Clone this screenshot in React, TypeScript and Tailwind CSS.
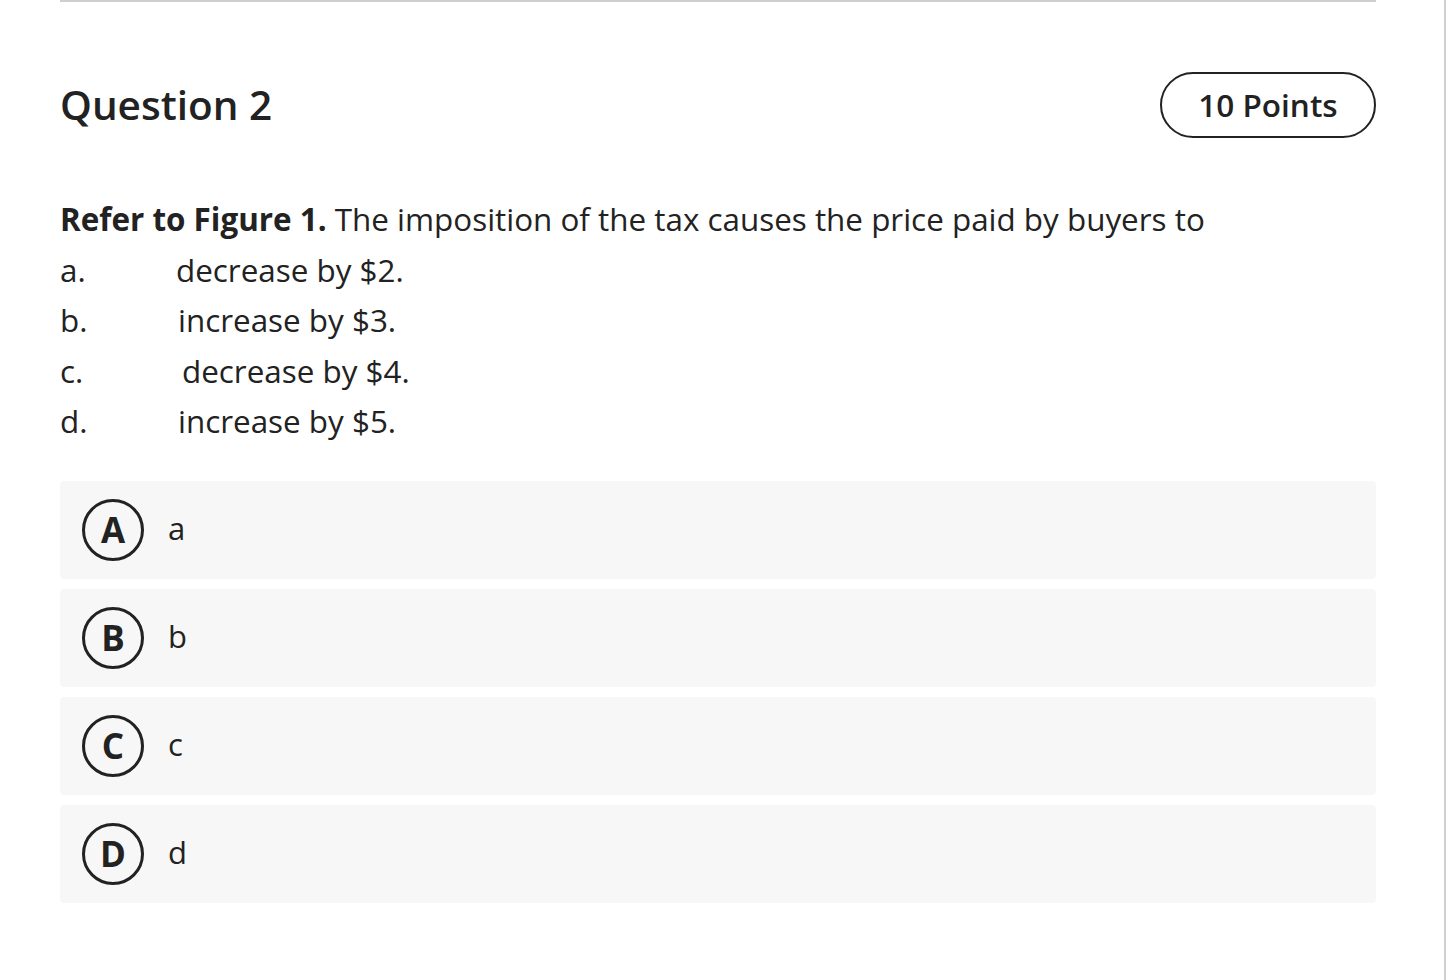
import React from 'react';

const options = [
  { key: 'a.', text: 'decrease by $2.', pad: 'pl-[116px]' },
  { key: 'b.', text: 'increase by $3.', pad: 'pl-[118px]' },
  { key: 'c.', text: 'decrease by $4.', pad: 'pl-[122px]' },
  { key: 'd.', text: 'increase by $5.', pad: 'pl-[118px]' },
];

const choices = [
  { letter: 'A', label: 'a' },
  { letter: 'B', label: 'b' },
  { letter: 'C', label: 'c' },
  { letter: 'D', label: 'd' },
];

export default function App() {
  return (
    <div className="w-[1453px] h-[980px] bg-white text-[#222] font-['Open_Sans',sans-serif] flex overflow-hidden">
      {/* Main column */}
      <div className="w-[1444px] pl-[60px] pr-[68px]">
        <div className="h-[2px] bg-[#cfcfcf]"></div>

        {/* Header */}
        <div className="flex items-center justify-between mt-[70px] h-[66px]">
          <h2 className="text-[40.5px] font-semibold leading-none">Question 2</h2>
          <div className="w-[216px] h-[66px] rounded-full border-2 border-[#222] flex items-center justify-center text-[31.5px] font-semibold">
            10 Points
          </div>
        </div>

        {/* Question body */}
        <div className="mt-[56px] text-[31.4px] leading-[50.5px]">
          <p>
            <span className="font-bold">Refer to Figure 1.</span> The imposition of the tax causes the price paid by buyers to
          </p>
          {options.map((o) => (
            <div key={o.key} className="flex">
              <span className="w-[0px] whitespace-nowrap">{o.key}</span>
              <span className={o.pad}>{o.text}</span>
            </div>
          ))}
        </div>

        {/* Answer choices */}
        <div className="mt-[34px] flex flex-col gap-[10px]">
          {choices.map((c) => (
            <div key={c.letter} className="h-[98px] bg-[#f7f7f7] rounded-[4px] flex items-center pl-[22px]">
              <div className="w-[62px] h-[62px] rounded-full border-[3px] border-[#222] flex items-center justify-center text-[35px] font-bold leading-none">
                {c.letter}
              </div>
              <span className="ml-[24px] text-[31px] leading-none -mt-[2px]">{c.label}</span>
            </div>
          ))}
        </div>
      </div>

      {/* Right edge rule */}
      <div className="w-[2px] h-full bg-[#cfcfcf]"></div>
    </div>
  );
}
